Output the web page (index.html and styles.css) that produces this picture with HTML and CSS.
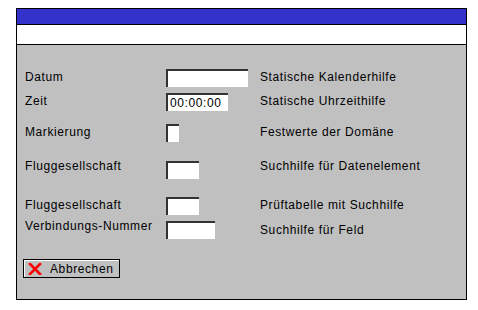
FILE: index.html
```html
<!DOCTYPE html>
<html lang="de">
<head>
    <meta charset="UTF-8">
    <title>Dynpro Suchhilfen</title>
    <link rel="stylesheet" href="styles.css">
</head>
<body>

    <!-- Screen frame -->
    <div class="screen">
        <div class="title-bar"></div>
        <div class="command-bar"></div>

        <!-- Form area -->
        <div class="form">
            <div class="row row-datum">
                <span class="label">Datum</span>
                <span class="cell"><input class="field w-datum" type="text" value=""></span>
                <span class="help">Statische Kalenderhilfe</span>
            </div>
            <div class="row row-zeit">
                <span class="label">Zeit</span>
                <span class="cell"><input class="field w-zeit" type="text" value="00:00:00"></span>
                <span class="help">Statische Uhrzeithilfe</span>
            </div>
            <div class="row row-mark">
                <span class="label">Markierung</span>
                <span class="cell"><input class="field w-mark" type="text" value=""></span>
                <span class="help">Festwerte der Domäne</span>
            </div>
            <div class="row row-flug1">
                <span class="label up">Fluggesellschaft</span>
                <span class="cell"><input class="field w-flug" type="text" value=""></span>
                <span class="help up">Suchhilfe für Datenelement</span>
            </div>
            <div class="row row-flug2">
                <span class="label">Fluggesellschaft</span>
                <span class="cell"><input class="field w-flug" type="text" value=""></span>
                <span class="help">Prüftabelle mit Suchhilfe</span>
            </div>
            <div class="row row-verb">
                <span class="label up">Verbindungs-Nummer</span>
                <span class="cell"><input class="field w-verb" type="text" value=""></span>
                <span class="help down">Suchhilfe für Feld</span>
            </div>

            <button class="btn-cancel" type="button">
                <svg class="icon-x" width="14" height="12" viewBox="0 0 14 12">
                    <path d="M2 1 L12 11 M12 1 L2 11" stroke="#ff0000" stroke-width="2.6" stroke-linecap="square" fill="none"/>
                </svg>
                <span>Abbrechen</span>
            </button>
        </div>
    </div>

</body>
</html>
```

FILE: styles.css
```css
* {
    margin: 0;
    padding: 0;
    box-sizing: border-box;
}

body {
    padding: 8px 0 0 16px;
    background-color: #ffffff;
    font-family: 'Liberation Sans', Arial, sans-serif;
    font-size: 12px;
    letter-spacing: 0.6px;
    color: #000000;
}

.screen {
    width: 451px;
    border: 1px solid #000000;
}

.title-bar {
    height: 16px;
    background-color: #3333cc;
    border-bottom: 1px solid #000000;
}

.command-bar {
    height: 20px;
    background-color: #ffffff;
    border-bottom: 1px solid #000000;
}

.form {
    height: 254px;
    background-color: #c0c0c0;
    padding: 24px 0 0 6px;
    display: flex;
    flex-direction: column;
    align-items: flex-start;
}

.row {
    display: flex;
    align-items: flex-start;
    height: 18px;
    padding-left: 2px;
}

.row-zeit { margin-top: 6px; }
.row-mark { margin-top: 13px; }
.row-flug1 { margin-top: 19px; }
.row-flug2 { margin-top: 18px; }
.row-verb { margin-top: 6px; }

.label {
    width: 141px;
    line-height: 14px;
    margin-top: 1px;
    white-space: nowrap;
}

.cell {
    width: 94px;
}

.help {
    line-height: 14px;
    margin-top: 1px;
    white-space: nowrap;
}

.label.up, .help.up { margin-top: -2px; }
.help.down { margin-top: 2px; }

.field {
    display: block;
    height: 18px;
    background-color: #ffffff;
    border: none;
    border-top: 2px solid #333333;
    border-left: 2px solid #333333;
    padding: 0 0 0 2px;
    font-family: 'Liberation Sans', Arial, sans-serif;
    font-size: 12px;
    letter-spacing: 0.6px;
    color: #000000;
    outline: none;
}

.w-datum { width: 82px; }
.w-zeit { width: 62px; }
.w-mark { width: 13px; }
.w-flug { width: 33px; }
.w-verb { width: 49px; }

.btn-cancel {
    margin-top: 20px;
    width: 97px;
    height: 19px;
    display: flex;
    align-items: center;
    gap: 8px;
    padding-left: 4px;
    background-color: #c0c0c0;
    border: 1px solid #000000;
    box-shadow: inset 1px 1px 0 #ffffff;
    font-family: 'Liberation Sans', Arial, sans-serif;
    font-size: 12px;
    letter-spacing: 0.6px;
    color: #000000;
    cursor: pointer;
}

.icon-x {
    display: block;
    flex: none;
}
```
